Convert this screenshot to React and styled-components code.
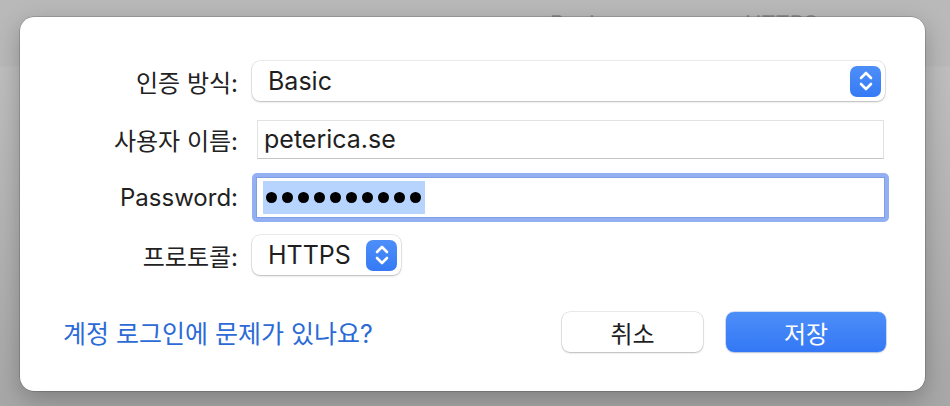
import React from "react"
import styled, { createGlobalStyle } from "styled-components"

const GlobalStyle = createGlobalStyle`
  html, body {
    margin: 0;
    padding: 0;
    height: 406px;
    overflow: hidden;
  }
  body {
    background: linear-gradient(#b9b9b9 0, #b9b9b9 66px, #bebebe 67px, #a7a7a7 406px);
    font-family: "Inter", "Noto Sans CJK KR", sans-serif;
    -webkit-font-smoothing: antialiased;
  }
`

const Backdrop = styled.div`
  position: relative;
  height: 406px;
  padding-top: 17px;
  box-sizing: border-box;
`

const BehindText = styled.div`
  position: absolute;
  top: 10px;
  left: ${(p) => p.left}px;
  font-size: 22px;
  color: #8e8e8e;
`

const Dialog = styled.div`
  position: relative;
  margin-left: 20px;
  width: 905px;
  height: 374px;
  box-sizing: border-box;
  background: #fff;
  border-radius: 14px;
  box-shadow: 0 0 0 0.5px rgba(0, 0, 0, 0.3), 0 8px 24px rgba(0, 0, 0, 0.25);
  padding: 35px 36px 0 0;
`

const Form = styled.div`
  display: grid;
  grid-template-columns: 218px 1fr;
  grid-auto-rows: 58px;
  column-gap: 14px;
  align-items: center;
`

const Label = styled.div`
  text-align: right;
  font-size: 24px;
  color: #222;
  white-space: nowrap;
`

const Popup = styled.div`
  display: flex;
  align-items: center;
  justify-content: space-between;
  height: 40px;
  width: ${(p) => (p.$wide ? "auto" : "149px")};
  margin-right: ${(p) => (p.$wide ? "4px" : "0")};
  box-sizing: border-box;
  padding: 0 4px 0 16px;
  background: #fff;
  border-radius: 8px;
  box-shadow: 0 0 0 0.5px rgba(0, 0, 0, 0.14), 0 1px 2px rgba(0, 0, 0, 0.22);
  font-size: 25px;
  color: #1f1f1f;
`

const Stepper = styled.div`
  width: 31px;
  height: 31px;
  border-radius: 7px;
  background: linear-gradient(#4d8ff8, #357af5);
  display: flex;
  align-items: center;
  justify-content: center;
`

const TextField = styled.div`
  height: 39px;
  margin: 0 5px;
  box-sizing: border-box;
  display: flex;
  align-items: center;
  padding-left: 6px;
  border: 1px solid #e2e2e2;
  border-bottom-color: #c6c6c6;
  font-size: 25px;
  color: #1f1f1f;
`

const FocusRing = styled.div`
  height: 49px;
  box-sizing: border-box;
  padding: 4px;
  border-radius: 5px;
  background: #93b0f2;
`

const PasswordInput = styled.div`
  height: 100%;
  box-sizing: border-box;
  background: #fff;
  border: 1px solid #7f9fe2;
  display: flex;
  align-items: center;
  padding-left: 6px;
`

const Selection = styled.div`
  display: flex;
  align-items: center;
  gap: 5px;
  height: 33px;
  padding: 0 4px 0 3px;
  background: #b6d4fd;
`

const Dot = styled.span`
  width: 11px;
  height: 11px;
  border-radius: 50%;
  background: #000;
`

const Footer = styled.div`
  display: flex;
  align-items: center;
  margin-top: 28px;
  padding-left: 43px;
  margin-right: 3px;
`

const HelpLink = styled.a`
  font-size: 25px;
  color: #2c6bd6;
  text-decoration: none;
  flex: 1;
`

const Button = styled.button`
  height: 40px;
  width: ${(p) => (p.$primary ? "160px" : "141px")};
  margin-left: ${(p) => (p.$primary ? "23px" : "0")};
  border: none;
  border-radius: 8px;
  font-family: inherit;
  font-size: 24px;
  color: ${(p) => (p.$primary ? "#fff" : "#1f1f1f")};
  background: ${(p) => (p.$primary ? "linear-gradient(#4c8ef8, #3478f6)" : "#fff")};
  box-shadow: ${(p) =>
    p.$primary
      ? "0 0 0 0.5px rgba(40, 100, 220, 0.4), 0 1px 2px rgba(0, 0, 0, 0.15)"
      : "0 0 0 0.5px rgba(0, 0, 0, 0.15), 0 1px 2px rgba(0, 0, 0, 0.22)"};
`

function Chevrons() {
  return (
    <svg width="16" height="22" viewBox="0 0 16 22" fill="none">
      <path d="M3 8 L8 3 L13 8" stroke="#fff" strokeWidth="2.6" strokeLinecap="round" strokeLinejoin="round" />
      <path d="M3 14 L8 19 L13 14" stroke="#fff" strokeWidth="2.6" strokeLinecap="round" strokeLinejoin="round" />
    </svg>
  )
}

export default function App() {
  return (
    <>
      <GlobalStyle />
      <Backdrop>
        <BehindText left={550}>Realm</BehindText>
        <BehindText left={745}>HTTPS</BehindText>
        <Dialog>
          <Form>
            <Label>인증 방식:</Label>
            <Popup $wide>
              <span>Basic</span>
              <Stepper>
                <Chevrons />
              </Stepper>
            </Popup>

            <Label>사용자 이름:</Label>
            <TextField>peterica.se</TextField>

            <Label>Password:</Label>
            <FocusRing>
              <PasswordInput>
                <Selection>
                  {Array.from({ length: 10 }).map((_, i) => (
                    <Dot key={i} />
                  ))}
                </Selection>
              </PasswordInput>
            </FocusRing>

            <Label>프로토콜:</Label>
            <Popup>
              <span>HTTPS</span>
              <Stepper>
                <Chevrons />
              </Stepper>
            </Popup>
          </Form>
          <Footer>
            <HelpLink href="#">계정 로그인에 문제가 있나요?</HelpLink>
            <Button>취소</Button>
            <Button $primary>저장</Button>
          </Footer>
        </Dialog>
      </Backdrop>
    </>
  )
}
